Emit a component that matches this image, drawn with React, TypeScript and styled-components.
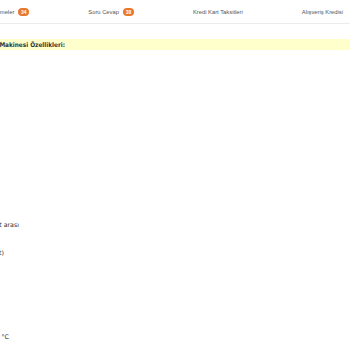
import styled, { createGlobalStyle } from "styled-components";

const GlobalStyle = createGlobalStyle`
  html, body {
    margin: 0;
    padding: 0;
    background: #fff;
    overflow: hidden;
  }
`;

const Page = styled.div`
  width: 350px;
  height: 350px;
  overflow: hidden;
  display: flex;
  flex-direction: column;
`;

const TabBar = styled.div`
  flex-shrink: 0;
  height: 23px;
  border-bottom: 1px solid #ececec;
  display: flex;
  flex-direction: row;
  justify-content: flex-end;
  align-items: center;
  gap: 59px;
  padding-right: 7px;
  white-space: nowrap;
`;

const Tab = styled.div`
  display: flex;
  align-items: center;
  gap: 4px;
  font-family: "Liberation Sans", Arial, sans-serif;
  font-size: 5.8px;
  color: #555;
`;

const Badge = styled.span`
  display: inline-flex;
  align-items: center;
  justify-content: center;
  width: 11px;
  height: 8px;
  border-radius: 4px;
  background: #e9772b;
  color: #fff;
  font-family: "Liberation Sans", Arial, sans-serif;
  font-weight: 700;
  font-size: 5px;
`;

const Content = styled.div`
  flex-shrink: 0;
  margin-top: 15px;
  margin-left: -260px;
  display: flex;
  flex-direction: column;
`;

const HeadingBar = styled.div`
  height: 11px;
  width: 700px;
  background: #ffffcc;
  display: flex;
  align-items: center;
`;

const HeadingText = styled.div<{ $end: number }>`
  width: ${(p) => 260 + p.$end}px;
  text-align: right;
  white-space: nowrap;
  font-family: "DejaVu Sans Condensed", "DejaVu Sans", Verdana, sans-serif;
  font-stretch: condensed;
  font-weight: 700;
  font-size: 6.4px;
  color: #333;
`;

const SpecRow = styled.div<{ $end: number }>`
  flex-shrink: 0;
  width: ${(p) => 260 + p.$end}px;
  height: 14px;
  line-height: 14px;
  text-align: right;
  white-space: nowrap;
  font-family: "DejaVu Sans", Verdana, sans-serif;
  font-size: 6.3px;
  color: #333;
`;

const tabs = [
  { label: "Değerlendirmeler", count: 34 },
  { label: "Soru Cevap", count: 38 },
  { label: "Kredi Kart Taksitleri" },
  { label: "Alışveriş Kredisi" },
];

const specs: { text: string; end: number }[] = [
  { text: "Enerji Sınıfı: A++", end: -40 },
  { text: "Kapasite: 12 kişilik", end: -40 },
  { text: "Program Sayısı: 5", end: -60 },
  { text: "Sıcaklık Ayarı: 4", end: -60 },
  { text: "Yarım Yük", end: -80 },
  { text: "Gecikmeli Başlatma", end: -40 },
  { text: "Su Tüketimi: 11 lt", end: -50 },
  { text: "Enerji Tüketimi: 1,02 kWh", end: -30 },
  { text: "Ses Seviyesi: 49 dB", end: -40 },
  { text: "Kurutma Sınıfı: A", end: -50 },
  { text: "Yıkama Sınıfı: A", end: -50 },
  { text: "Sepet Sayısı: 2", end: -60 },
  { text: "Program Süresi: 30 dakika - 3 saat arası", end: 19 },
  { text: "Renk: Beyaz", end: -70 },
  { text: "Boyutlar: 85 x 60 x 60 cm (Y x G x D) (net)", end: 4 },
  { text: "Ağırlık: 45 kg", end: -60 },
  { text: "Tuz Göstergesi", end: -60 },
  { text: "Parlatıcı Göstergesi", end: -40 },
  { text: "Taşma Emniyeti", end: -60 },
  { text: "Çocuk Kilidi", end: -70 },
  { text: "Yıkama Sıcaklığı: 40 - 70 °C", end: 9 },
  { text: "Garanti: 2 yıl", end: -60 },
];

export default function App() {
  return (
    <>
      <GlobalStyle />
      <Page>
        <TabBar>
          {tabs.map((t) => (
            <Tab key={t.label}>
              {t.label}
              {t.count !== undefined && <Badge>{t.count}</Badge>}
            </Tab>
          ))}
        </TabBar>
        <Content>
          <HeadingBar>
            <HeadingText $end={65}>Bulaşık Makinesi Özellikleri:</HeadingText>
          </HeadingBar>
          {specs.map((s) => (
            <SpecRow key={s.text} $end={s.end}>
              {s.text}
            </SpecRow>
          ))}
        </Content>
      </Page>
    </>
  );
}
